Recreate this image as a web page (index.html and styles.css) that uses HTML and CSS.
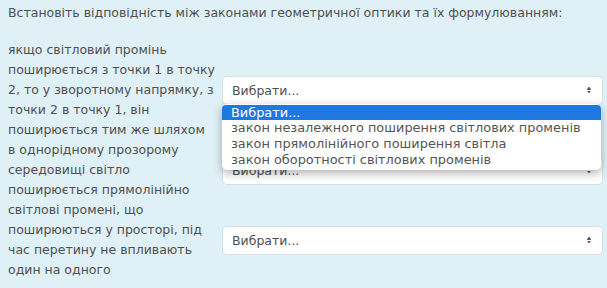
FILE: index.html
```html
<!DOCTYPE html>
<html lang="uk">
<head>
    <meta charset="UTF-8">
    <title>Відповідність</title>
    <link rel="stylesheet" href="styles.css">
</head>
<body>
    <div class="que">
        <div class="qtext">Встановіть відповідність між законами геометричної оптики та їх формулюванням:</div>
        <div class="answer">
            <div class="stem">якщо світловий промінь поширюється з точки 1 в точку 2, то у зворотному напрямку, з точки 2 в точку 1, він поширюється тим же шляхом</div>
            <div class="control">
                <div class="select">Вибрати...</div>
                <ul class="menu">
                    <li class="active">Вибрати...</li>
                    <li>закон незалежного поширення світлових променів</li>
                    <li>закон прямолінійного поширення світла</li>
                    <li>закон оборотності світлових променів</li>
                </ul>
            </div>
            <div class="stem">в однорідному прозорому середовищі світло поширюється прямолінійно</div>
            <div class="control">
                <div class="select">Вибрати...</div>
            </div>
            <div class="stem">світлові промені, що поширюються у просторі, під час перетину не впливають один на одного</div>
            <div class="control">
                <div class="select">Вибрати...</div>
            </div>
        </div>
    </div>
</body>
</html>
```

FILE: styles.css
```css
body { margin: 0; background-color: #dff1f7; font-family: "DejaVu Sans", sans-serif; font-size: 12.5px; line-height: 20px; color: #4f4f4f; }
.que { padding: 3px 4px 0 8px; }
.qtext { margin-bottom: 17px; }
.answer { display: grid; grid-template-columns: 208px 1fr; column-gap: 6px; align-items: center; }
.control { position: relative; }
.select { height: 27px; line-height: 27px; background: #fff; border: 1px solid #d4e2e8; border-radius: 5px; padding: 0 9px; position: relative; }
.select::after { content: ""; position: absolute; right: 11px; top: 10px; width: 4px; height: 7px; background:
    linear-gradient(to bottom, #555 0 3px, transparent 3px 4px, #555 4px 7px); clip-path: polygon(50% 0, 100% 40%, 100% 60%, 50% 100%, 0 60%, 0 40%); }
.menu { position: absolute; left: 0; right: 2px; top: 28px; margin: 0; padding: 1px 0 2px 0; list-style: none; background: #fff; border-radius: 5px; box-shadow: 0 3px 10px rgba(0, 0, 0, 0.32); font-size: 12.9px; line-height: 15.8px; white-space: nowrap; z-index: 2; }
.menu li { padding: 0 9px; color: #555; }
.menu li.active { background: #1e78e0; color: #fff; border-radius: 4px 4px 0 0; }
```
